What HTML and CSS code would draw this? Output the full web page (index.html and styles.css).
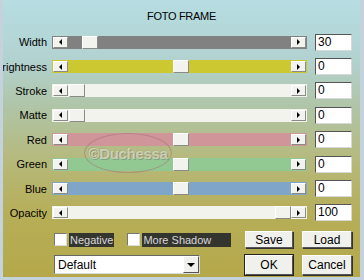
FILE: index.html
```html
<!DOCTYPE html>
<html>
<head lang="en">
    <meta charset="UTF-8">
    <title>Foto Frame</title>
    <link rel="stylesheet" href="styles.css">
</head>
<body>
    <div class="dialog">
        <div class="title">FOTO FRAME</div>
        <div class="rows">
            <div class="row">
                <span class="label">Width</span>
                <div class="slider gray">
                    <span class="btn"><i class="tri-left"></i></span>
                    <div class="area"><span class="thumb" style="left:14px"></span></div>
                    <span class="btn"><i class="tri-right"></i></span>
                </div>
                <span class="value">30</span>
            </div>
            <div class="row">
                <span class="label">Brightness</span>
                <div class="slider yellow">
                    <span class="btn"><i class="tri-left"></i></span>
                    <div class="area"><span class="thumb" style="left:105px"></span></div>
                    <span class="btn"><i class="tri-right"></i></span>
                </div>
                <span class="value">0</span>
            </div>
            <div class="row">
                <span class="label">Stroke</span>
                <div class="slider white">
                    <span class="btn"><i class="tri-left"></i></span>
                    <div class="area"><span class="thumb" style="left:1px"></span></div>
                    <span class="btn"><i class="tri-right"></i></span>
                </div>
                <span class="value">0</span>
            </div>
            <div class="row">
                <span class="label">Matte</span>
                <div class="slider white">
                    <span class="btn"><i class="tri-left"></i></span>
                    <div class="area"><span class="thumb" style="left:1px"></span></div>
                    <span class="btn"><i class="tri-right"></i></span>
                </div>
                <span class="value">0</span>
            </div>
            <div class="row">
                <span class="label">Red</span>
                <div class="slider red">
                    <span class="btn"><i class="tri-left"></i></span>
                    <div class="area"><span class="thumb" style="left:105px"></span></div>
                    <span class="btn"><i class="tri-right"></i></span>
                </div>
                <span class="value">0</span>
            </div>
            <div class="row">
                <span class="label">Green</span>
                <div class="slider green">
                    <span class="btn"><i class="tri-left"></i></span>
                    <div class="area"><span class="thumb" style="left:105px"></span></div>
                    <span class="btn"><i class="tri-right"></i></span>
                </div>
                <span class="value">0</span>
            </div>
            <div class="row">
                <span class="label">Blue</span>
                <div class="slider blue">
                    <span class="btn"><i class="tri-left"></i></span>
                    <div class="area"><span class="thumb" style="left:105px"></span></div>
                    <span class="btn"><i class="tri-right"></i></span>
                </div>
                <span class="value">0</span>
            </div>
            <div class="row">
                <span class="label">Opacity</span>
                <div class="slider white">
                    <span class="btn"><i class="tri-left"></i></span>
                    <div class="area"><span class="thumb" style="left:207px"></span></div>
                    <span class="btn"><i class="tri-right"></i></span>
                </div>
                <span class="value">100</span>
            </div>
        </div>
        <div class="bottom">
            <div class="checks">
                <span class="box"></span><span class="check-label">Negative</span>
                <span class="box box2"></span><span class="check-label wide">More Shadow</span>
            </div>
            <span class="button">Save</span>
            <span class="button">Load</span>
            <div class="select">
                <span class="select-text">Default</span>
                <span class="select-btn"><i class="tri-down"></i></span>
            </div>
            <span class="button default">OK</span>
            <span class="button">Cancel</span>
        </div>
        <div class="watermark">©Duchessa</div>
    </div>
</body>
</html>
```

FILE: styles.css
```css
*{
    padding: 0;
    margin: 0;
    box-sizing: border-box;
}
body{
    font-family: "Liberation Sans", Arial, sans-serif;
    font-size: 11px;
    color: #000;
}
.dialog{
    position: relative;
    width: 364px;
    height: 280px;
    border-left: 3px solid #c4d2dc;
    border-right: 4px solid #c4d2dc;
    border-bottom: 3px solid #c4d2dc;
    background: linear-gradient(#b6dde2 0px, #b2d2d0 60px, #b0c4a4 110px, #b6b878 165px, #b6ae58 215px, #b4a84a 277px);
    overflow: hidden;
}
.title{
    height: 30px;
    padding-top: 2px;
    line-height: 28px;
    text-align: center;
    font-size: 11px;
    letter-spacing: -0.3px;
}
.rows{
    display: flex;
    flex-direction: column;
}
.row{
    height: 24.4px;
    display: flex;
    align-items: center;
}
.label{
    width: 44px;
    display: flex;
    justify-content: flex-end;
    overflow: hidden;
    white-space: nowrap;
    font-size: 11px;
}
.slider{
    margin-left: 5px;
    width: 255px;
    height: 13px;
    display: flex;
    align-items: center;
    padding: 0 1px;
}
.gray{ background: #818181; }
.yellow{ background: #cbc832; }
.white{ background: #f3f3ee; }
.red{ background: #d09598; }
.green{ background: #92c993; }
.blue{ background: #7fa6c8; }
.area{
    flex: 1;
    height: 13px;
    position: relative;
}
.btn, .thumb{
    width: 15px;
    height: 11px;
    background: #f2f2ee;
    border-top: 1px solid #fff;
    border-left: 1px solid #fff;
    border-right: 1px solid #8a8a86;
    border-bottom: 1px solid #8a8a86;
    display: flex;
    align-items: center;
    justify-content: center;
}
.thumb{
    position: absolute;
    top: 0;
    height: 13px;
    width: 16px;
}
.tri-left{
    width: 0;
    height: 0;
    border-top: 3px solid transparent;
    border-bottom: 3px solid transparent;
    border-right: 3px solid #000;
}
.tri-right{
    width: 0;
    height: 0;
    border-top: 3px solid transparent;
    border-bottom: 3px solid transparent;
    border-left: 3px solid #000;
}
.tri-down{
    width: 0;
    height: 0;
    border-left: 4px solid transparent;
    border-right: 4px solid transparent;
    border-top: 4px solid #000;
}
.value{
    margin-left: 8px;
    width: 37px;
    height: 17px;
    background: #fff;
    border-top: 1px solid #555;
    border-left: 1px solid #555;
    border-right: 1px solid #d8d8d8;
    border-bottom: 1px solid #d8d8d8;
    padding-left: 2px;
    font-size: 12px;
    line-height: 15px;
}
.bottom{
    margin-top: 6px;
    padding-left: 51px;
    display: grid;
    grid-template-columns: 182px 48px 50px;
    grid-template-rows: 17px 20px;
    column-gap: 9px;
    row-gap: 7px;
}
.checks{
    display: flex;
    align-items: center;
}
.box{
    width: 13px;
    height: 13px;
    background: #fff;
    border-top: 1px solid #777;
    border-left: 1px solid #777;
    border-right: 1px solid #ddd;
    border-bottom: 1px solid #ddd;
}
.box2{
    margin-left: 13px;
}
.check-label{
    margin-left: 2px;
    height: 14px;
    line-height: 14px;
    padding: 0 1px;
    background: #353530;
    color: #d8d8d8;
    font-size: 11px;
    white-space: nowrap;
}
.wide{
    width: 89px;
}
.button{
    background: #f0f0ec;
    border-top: 1px solid #fff;
    border-left: 1px solid #fff;
    border-right: 1px solid #555;
    border-bottom: 1px solid #555;
    box-shadow: 1px 1px 0 #333;
    display: flex;
    align-items: center;
    justify-content: center;
    font-size: 12px;
}
.default{
    outline: 1px solid #222;
}
.select{
    width: 146px;
    height: 19px;
    background: #fff;
    border-top: 1px solid #666;
    border-left: 1px solid #666;
    border-right: 1px solid #ddd;
    border-bottom: 1px solid #ddd;
    display: flex;
    align-items: center;
}
.select-text{
    flex: 1;
    padding-left: 3px;
    font-size: 12px;
}
.select-btn{
    width: 16px;
    height: 17px;
    background: #f0f0ec;
    border-top: 1px solid #fff;
    border-left: 1px solid #fff;
    border-right: 1px solid #555;
    border-bottom: 1px solid #555;
    display: flex;
    align-items: center;
    justify-content: center;
}
.watermark{
    position: absolute;
    left: 81px;
    top: 133px;
    width: 88px;
    height: 40px;
    border-radius: 50%;
    border: 1px solid rgba(160, 110, 120, 0.5);
    text-align: center;
    line-height: 40px;
    font-size: 15px;
    font-weight: bold;
    letter-spacing: -0.3px;
    color: rgba(235, 235, 220, 0.6);
    text-shadow: 1px 1px 0 rgba(110, 110, 100, 0.45), -1px -1px 0 rgba(140, 140, 130, 0.25);
}
```
